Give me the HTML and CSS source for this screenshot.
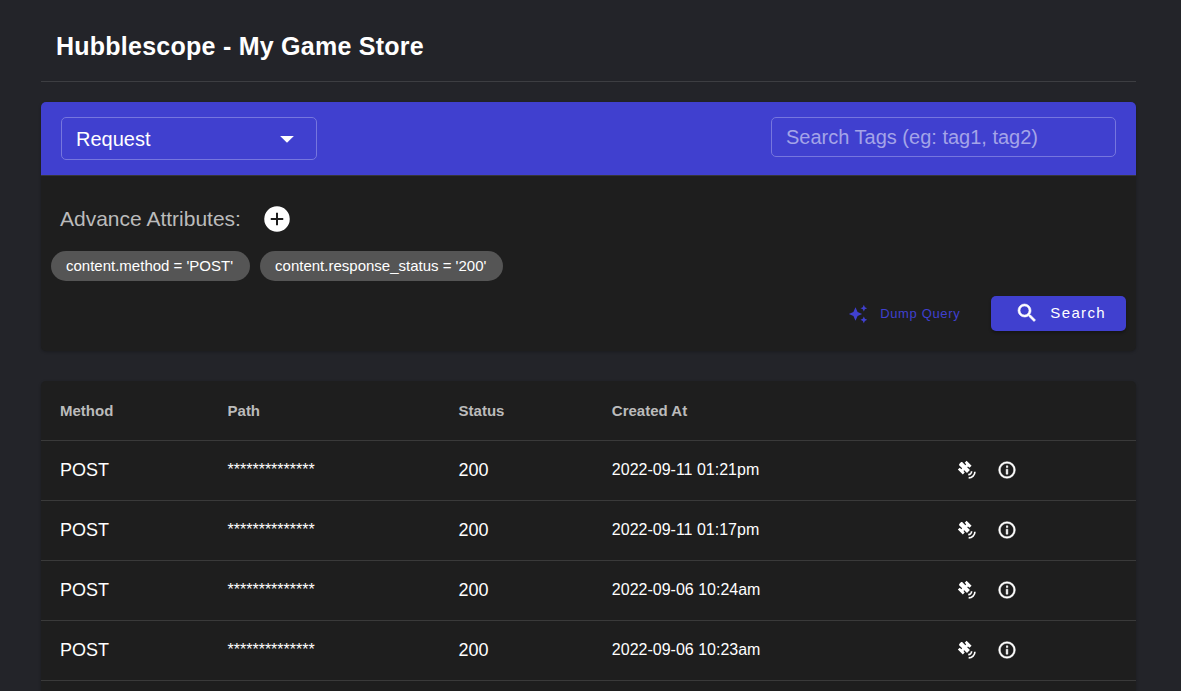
FILE: index.html
```html
<!DOCTYPE html>
<html lang="en">
<head>
<meta charset="utf-8">
<meta name="viewport" content="width=device-width, initial-scale=1">
<title>Hubblescope - My Game Store</title>
<link rel="stylesheet" href="styles.css">
</head>
<body>
<svg class="sprite" aria-hidden="true">
  <symbol id="satellite" viewBox="0 0 24 24"><path d="M11.5,1L17.5,7L15,9.3L13.2,7.8L12.2,8.7L15.5,12L12,15.5L8.7,12.2L7.8,13.2L9.3,15L7,17.5L1,11.5L3.3,9.2L5.2,11L6.2,10L3,6.8C2.3,6 2.3,5.2 3,4.4L4.4,3C5.2,2.3 6,2.3 6.8,3L10,6.2L11,5.2L9.2,3.3Z"/><path class="signal" d="M17.5,13.5A4,4 0 0,1 13.5,17.5M21.5,14A7.5,7.5 0 0,1 14,21.5"/></symbol>
  <symbol id="info" viewBox="0 0 24 24"><path d="M11,9H13V7H11M12,20C7.59,20 4,16.41 4,12C4,7.59 7.59,4 12,4C16.41,4 20,7.59 20,12C20,16.41 16.41,20 12,20M12,2A10,10 0 0,0 2,12A10,10 0 0,0 12,22A10,10 0 0,0 22,12A10,10 0 0,0 12,2M11,17H13V11H11V17Z"/></symbol>
</svg>
<main class="page">
  <header class="page-header"><h1 class="title">Hubblescope - My Game Store</h1></header>

  <form class="card filters">
    <div class="toolbar">
      <div class="select-box">
        <select class="field select" aria-label="Entry type"><option>Request</option></select>
        <svg class="caret" viewBox="0 0 24 24" aria-hidden="true"><path d="M6.5,9.5L12,15L17.5,9.5H6.5Z"/></svg>
      </div>
      <input class="field tags" type="text" aria-label="Search tags" placeholder="Search Tags (eg: tag1, tag2)">
    </div>
    <div class="attributes">
      <span class="attributes-label">Advance Attributes:</span>
      <button class="icon-button" type="button" aria-label="Add attribute">
        <svg class="icon-add" viewBox="0 0 24 24" aria-hidden="true"><path d="M17,12.8H12.8V17H11.2V12.8H7V11.2H11.2V7H12.8V11.2H17M12,1.8A10.2,10.2 0 0,0 1.8,12A10.2,10.2 0 0,0 12,22.2A10.2,10.2 0 0,0 22.2,12A10.2,10.2 0 0,0 12,1.8Z"/></svg>
      </button>
    </div>
    <div class="chips">
      <span class="chip">content.method = 'POST'</span>
      <span class="chip">content.response_status = '200'</span>
    </div>
    <div class="actions">
      <button class="button button-text" type="button">
        <svg class="icon-dump" viewBox="0 0 24 24" aria-hidden="true"><path d="M19 9l1.25-2.75L23 5l-2.75-1.25L19 1l-1.25 2.75L15 5l2.75 1.25L19 9zm-7.5.5L9 4 6.5 9.5 1 12l5.5 2.5L9 20l2.5-5.5L17 12l-5.5-2.5zM19 15l-1.25 2.75L15 19l2.75 1.25L19 23l1.25-2.75L23 19l-2.75-1.25L19 15z"/></svg>
        Dump Query
      </button>
      <button class="button button-primary" type="submit">
        <svg class="icon-search" viewBox="0 0 24 24" aria-hidden="true"><path d="M9.5,3A6.5,6.5 0 0,1 16,9.5C16,11.11 15.41,12.59 14.44,13.73L14.71,14H15.5L20.5,19L19,20.5L14,15.5V14.71L13.73,14.44C12.59,15.41 11.11,16 9.5,16A6.5,6.5 0 0,1 3,9.5A6.5,6.5 0 0,1 9.5,3M9.5,5C7,5 5,7 5,9.5C5,12 7,14 9.5,14C12,14 14,12 14,9.5C14,7 12,5 9.5,5Z"/></svg>
        Search
      </button>
    </div>
  </form>

  <section class="card results">
    <table class="table">
      <thead>
        <tr><th class="col-method">Method</th><th class="col-path">Path</th><th class="col-status">Status</th><th class="col-created">Created At</th><th class="col-actions"></th></tr>
      </thead>
      <tbody>
        <tr><td>POST</td><td class="path">**************</td><td>200</td><td class="date">2022-09-11 01:21pm</td><td><div class="row-actions"><button class="icon-button" type="button" aria-label="Track"><svg class="icon-row"><use href="#satellite"/></svg></button><button class="icon-button" type="button" aria-label="Details"><svg class="icon-row icon-info"><use href="#info"/></svg></button></div></td></tr>
        <tr><td>POST</td><td class="path">**************</td><td>200</td><td class="date">2022-09-11 01:17pm</td><td><div class="row-actions"><button class="icon-button" type="button" aria-label="Track"><svg class="icon-row"><use href="#satellite"/></svg></button><button class="icon-button" type="button" aria-label="Details"><svg class="icon-row icon-info"><use href="#info"/></svg></button></div></td></tr>
        <tr><td>POST</td><td class="path">**************</td><td>200</td><td class="date">2022-09-06 10:24am</td><td><div class="row-actions"><button class="icon-button" type="button" aria-label="Track"><svg class="icon-row"><use href="#satellite"/></svg></button><button class="icon-button" type="button" aria-label="Details"><svg class="icon-row icon-info"><use href="#info"/></svg></button></div></td></tr>
        <tr><td>POST</td><td class="path">**************</td><td>200</td><td class="date">2022-09-06 10:23am</td><td><div class="row-actions"><button class="icon-button" type="button" aria-label="Track"><svg class="icon-row"><use href="#satellite"/></svg></button><button class="icon-button" type="button" aria-label="Details"><svg class="icon-row icon-info"><use href="#info"/></svg></button></div></td></tr>
      </tbody>
    </table>
  </section>
</main>
</body>
</html>
```
FILE: styles.css
```css
* { box-sizing: border-box; }

body {
  margin: 0;
  background: #232429;
  color: #fff;
  font-family: "Liberation Sans", Arial, sans-serif;
}

button, select, input { font-family: inherit; }

svg { display: block; fill: currentColor; }

.sprite { display: none; }

.page {
  display: flex;
  flex-direction: column;
  min-height: 100vh;
  padding: 11px 45px 0 41px;
}

.page-header {
  padding: 20px 15px;
  margin-bottom: 20px;
  border-bottom: 1px solid #3d3e42;
}

.title {
  margin: 0;
  font-size: 25px;
  line-height: 30px;
  letter-spacing: 0.01em;
}

.card {
  background: #1e1e1e;
  border-radius: 5px;
  box-shadow: 0 1px 3px rgba(0, 0, 0, 0.25);
}

.filters {
  margin-bottom: 30px;
  padding-bottom: 20px;
}

.toolbar {
  display: flex;
  justify-content: space-between;
  align-items: flex-start;
  padding: 15px 20px;
  background: #4040cf;
  border-bottom: 1px solid #36363a;
  border-radius: 5px 5px 0 0;
}

.field {
  padding: 0 14px;
  border: 1px solid #7676de;
  border-radius: 5px;
  background: transparent;
  color: #fff;
  font-size: 20px;
}

.select-box {
  display: grid;
  grid-template-columns: 1fr auto;
  align-items: center;
  width: 256px;
}

.select {
  grid-area: 1 / 1 / 2 / 3;
  width: 100%;
  height: 43px;
  appearance: none;
}

.caret {
  grid-area: 1 / 2;
  width: 30px;
  height: 30px;
  margin-right: 15px;
  pointer-events: none;
}

.tags {
  width: 345px;
  height: 40px;
}

.tags::placeholder { color: #a4a4e8; }

.attributes {
  display: flex;
  align-items: center;
  gap: 21px;
  padding: 28px 20px 17px 19px;
}

.attributes-label {
  color: #bbb;
  font-size: 21px;
}

.icon-button {
  padding: 0;
  border: 0;
  background: none;
  color: #fff;
}

.icon-add { width: 30px; height: 30px; }

.chips {
  display: flex;
  gap: 10px;
  padding: 0 10px 15px;
}

.chip {
  padding: 0 17px 0 15px;
  border-radius: 15px;
  background: #555;
  font-size: 15px;
  line-height: 30px;
}

.actions {
  display: flex;
  justify-content: flex-end;
  gap: 15px;
  padding: 0 10px;
}

.button {
  display: flex;
  align-items: center;
  height: 35px;
  border: 0;
  border-radius: 5px;
}

.button-text {
  gap: 12px;
  padding: 0 16px;
  background: none;
  color: #4040cf;
  font-size: 13px;
  letter-spacing: 0.05em;
}

.button-primary {
  gap: 11px;
  padding: 0 20px 2px 24px;
  background: #4040cf;
  color: #fff;
  font-size: 15px;
  letter-spacing: 0.09em;
  box-shadow: 0 2px 3px rgba(0, 0, 0, 0.3);
}

.icon-dump { width: 20px; height: 20px; }

.icon-search {
  width: 24px;
  height: 24px;
  stroke: currentColor;
  stroke-width: 0.6;
}

.results {
  flex: 1;
  border-radius: 5px 5px 0 0;
}

.table {
  width: 100%;
  table-layout: fixed;
  border-collapse: separate;
  border-spacing: 0;
}

.table th,
.table td {
  height: 60px;
  padding: 0 0 1px 19px;
  border-bottom: 1px solid #3a3a3a;
  text-align: left;
}

.table th {
  color: #bbb;
  font-size: 15px;
}

.table td { font-size: 18px; }

.table .path { font-size: 16px; }

.table .date { font-size: 16px; }

.col-method { width: 15.3%; }
.col-path { width: 21.1%; }
.col-status { width: 14%; }
.col-created { width: 31.5%; }

.row-actions {
  display: flex;
  gap: 20px;
}

.icon-row {
  width: 20px;
  height: 20px;
}

.icon-info {
  stroke: currentColor;
  stroke-width: 0.6;
}

.signal {
  fill: none;
  stroke: currentColor;
  stroke-width: 2;
}
```
